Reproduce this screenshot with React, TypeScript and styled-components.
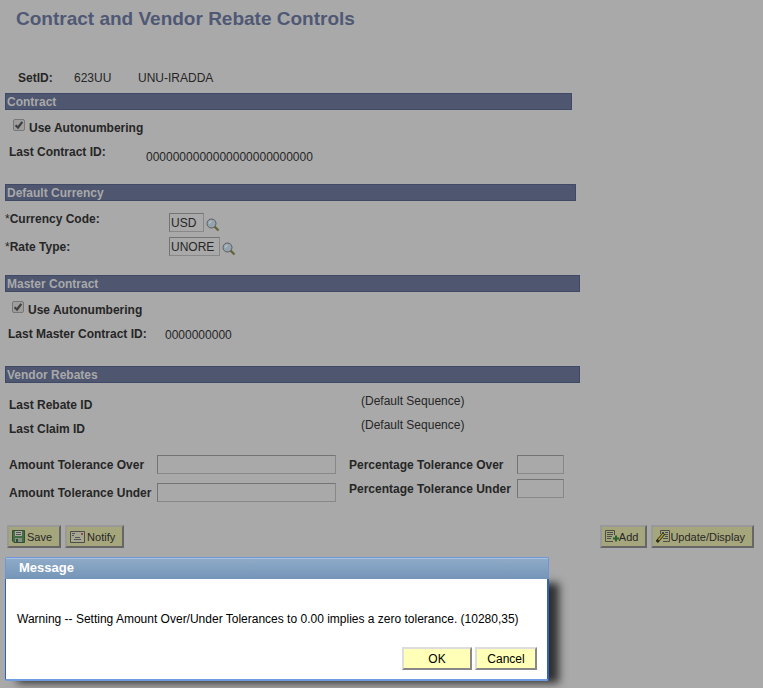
import React from "react";
import styled, { createGlobalStyle } from "styled-components";

const Global = createGlobalStyle`
  * { box-sizing: border-box; }
  body {
    margin: 0;
    background: #a9a9a9;
    color: #262626;
    font: 12px/16px "Liberation Sans", Arial, sans-serif;
  }
  html { background: #a9a9a9; }
  input, button { font-family: inherit; }
`;

const Page = styled.main`
  display: flex;
  flex-direction: column;
  padding: 0 9px 7px 5px;
`;

const Title = styled.h1`
  margin: 7px 0 0 11px;
  color: #4f5874;
  font-size: 19px;
  line-height: 24px;
  font-weight: bold;
`;

const SetRow = styled.div`
  display: grid;
  grid-template-columns: 56px 64px auto;
  margin: 39px 0 7px 13px;
`;

const Strong = styled.span`
  font-weight: bold;
`;

const Value = styled.output`
  font-size: 12px;
`;

const Section = styled.section<{ $width: number }>`
  width: 100%;
  max-width: ${(p) => p.$width}px;
  min-height: 91px;
`;

const Bar = styled.h2`
  margin: 0;
  padding: 2px 1px 0;
  border: 1px solid #404a66;
  background: #4e5670;
  color: #a9a9a9;
  font-size: 12px;
  line-height: 13px;
  font-weight: bold;
`;

const CheckRow = styled.label<{ $inset: number }>`
  display: flex;
  gap: 4px;
  padding: 9px 0 0 ${(p) => p.$inset}px;
  font-weight: bold;
  line-height: 18px;
`;

const Check = styled.input`
  appearance: none;
  width: 12px;
  height: 12px;
  margin: 0;
  border: 1px solid #777;
  border-radius: 2px;
  background: #9e9e9e
    url("data:image/svg+xml,%3Csvg xmlns='http://www.w3.org/2000/svg' viewBox='0 0 10 10'%3E%3Cpath d='M1.500 5.200 4 7.500 8.300 1.800' fill='none' stroke='%23404040' stroke-width='2.200'/%3E%3C/svg%3E");
`;

const FieldRow = styled.div<{ $label: number; $inset: number; $drop: number }>`
  display: grid;
  grid-template-columns: ${(p) => p.$label}px auto;
  justify-content: start;
  padding: 7px 0 0 ${(p) => p.$inset}px;
  & > output { padding-top: ${(p) => p.$drop}px; }
`;

const Label = styled.label`
  font-weight: bold;
  white-space: nowrap;
`;

const TextBox = styled.input<{ $width: number }>`
  width: ${(p) => p.$width}px;
  height: 19px;
  padding: 0 1px;
  border: 1px solid;
  border-color: #747474 #888 #888 #747474;
  border-radius: 0;
  background: #a9a9a9;
  color: #262626;
  font-size: 12px;
`;

const CurrencyGrid = styled.div`
  display: grid;
  grid-template-columns: 164px auto;
  grid-auto-rows: 19px;
  row-gap: 5px;
  padding-top: 12px;
`;

const Required = styled(Label)<{ $lift?: boolean }>`
  line-height: ${(p) => (p.$lift ? 12 : 20)}px;
  &::before { content: "*"; font-weight: normal; }
`;

const Lookup = styled.div`
  display: flex;
  align-items: flex-start;
  gap: 2px;
`;

const LookupButton = styled.button`
  display: flex;
  padding: 5px 0 0;
  border: 0;
  background: none;
`;

const RebateGrid = styled.div`
  display: grid;
  grid-template-columns: 352px auto;
  grid-auto-rows: 24px;
  justify-content: start;
  padding: 10px 0 0 4px;
  & > :nth-child(odd) { padding-top: 4px; }
`;

const Tolerances = styled.div`
  display: flex;
  gap: 13px;
  padding: 14px 0 0 4px;
`;

const ToleranceGrid = styled.div<{ $label: number; $gap: number }>`
  display: grid;
  grid-template-columns: ${(p) => p.$label}px auto;
  grid-auto-rows: 19px;
  align-content: start;
  align-items: center;
  row-gap: ${(p) => p.$gap}px;
`;

const Toolbar = styled.div`
  display: flex;
  gap: 4px;
  margin: 23px 0 9px 2px;
`;

const Spacer = styled.div`
  flex: 1;
`;

const ToolButton = styled.button<{ $gap?: number }>`
  display: flex;
  align-items: center;
  gap: ${(p) => p.$gap ?? 0}px;
  height: 23px;
  padding: 0 7px 0 3px;
  border: 2px solid;
  border-color: #999 #666 #666 #999;
  background: #a6a67d;
  color: #262626;
  font-size: 11px;
  white-space: nowrap;
`;

const Dialog = styled.div`
  width: 100%;
  max-width: 544px;
`;

const DialogTitle = styled.h2`
  position: relative;
  z-index: 1;
  margin: 0;
  padding: 0 13px;
  height: 22px;
  border: 1px solid #6f96d8;
  border-bottom: 0;
  border-radius: 2px 2px 0 0;
  box-shadow: inset 0 1px #a9c3dd;
  background: linear-gradient(#8fabc8, #7595b8);
  color: #fff;
  font-size: 13px;
  line-height: 20px;
`;

const DialogBody = styled.div`
  padding: 32px 10px 9px 11px;
  border: 1px solid #2e63b8;
  border-width: 0 2px 2px 1px;
  border-bottom-color: #6f9ae0;
  border-radius: 0 0 2px 2px;
  background: #fff;
  color: #000;
  box-shadow: 11px 3px 9px -1px #303030;
`;

const Message = styled.p`
  margin: 0 0 20px;
  line-height: 16px;
`;

const Actions = styled.div`
  display: flex;
  justify-content: flex-end;
  gap: 3px;
`;

const DialogButton = styled.button<{ $width: number }>`
  width: ${(p) => p.$width}px;
  height: 23px;
  padding: 0;
  border: 2px solid;
  border-color: #ddd #888 #888 #ddd;
  background: #ffffb8;
  color: #000;
  font-size: 12px;
`;

const LookupIcon = () => (
  <svg width="14" height="14" viewBox="0 0 14 14" fill="none">
    <path d="M8.6 8.6 12.5 12.5" stroke="#64643a" strokeWidth="2.2" />
    <circle cx="5.5" cy="5.5" r="4.5" fill="#93a4ae" stroke="#5c5c5c" />
    <path d="M3 5.5 5.5 3" stroke="#b4bec4" strokeWidth="1.5" />
  </svg>
);

const SaveIcon = () => (
  <svg width="13" height="13" viewBox="0 0 13 13">
    <path d="M.5.5h12v12H2L.5 11z" fill="#417047" stroke="#354b3c" />
    <path d="M3 1h7v5H3z" fill="#a9a9a0" />
    <path d="M4 2.5h5M4 4.5h5" stroke="#555" />
    <path d="M3 8h7v4H3z" fill="#85907f" />
    <path d="M4 9h2v3H4z" fill="#354b3c" />
  </svg>
);

const NotifyIcon = () => (
  <svg width="15" height="12" viewBox="0 0 15 12" fill="none">
    <path d="M.5.5h14v11H.5z" fill="#a6a691" stroke="#4c4c4c" />
    <path d="M2 2.5h3M2 4.5h2M5 6.5h5M4 8.5h7" stroke="#555" />
    <path d="M11 2h2v2h-2z" fill="#8e4940" />
  </svg>
);

const AddIcon = () => (
  <svg width="14" height="13" viewBox="0 0 14 13" fill="none">
    <path d="M8 11.5H.5V.5h9V5M2 2.5h6M2 4.5h6M2 6.5h5M2 8.5h4" stroke="#4d4d49" />
    <path d="M11 5.500v6M8 8.500h6" stroke="#286332" strokeWidth="2" />
  </svg>
);

const UpdateIcon = () => (
  <svg width="14" height="13" viewBox="0 0 14 13" fill="none">
    <path d="M4.5 4V.5h9v11H7M6 2.500h2M9 2.500h3M9 4.500h3M9 6.500h3M7 8.500h5" stroke="#4d4d49" />
    <path d="M.8 12 8 3.500" stroke="#26261c" strokeWidth="3" />
    <path d="M2.500 10 7.500 4" stroke="#b0a630" strokeWidth="1.400" />
  </svg>
);

export default function App() {
  return (
    <>
      <Global />
      <Page>
        <Title>Contract and Vendor Rebate Controls</Title>
        <SetRow>
          <Strong>SetID:</Strong>
          <Value>623UU</Value>
          <Value>UNU-IRADDA</Value>
        </SetRow>

        <Section $width={567}>
          <Bar>Contract</Bar>
          <CheckRow $inset={8}>
            <Check type="checkbox" defaultChecked />
            Use Autonumbering
          </CheckRow>
          <FieldRow $label={137} $inset={4} $drop={5}>
            <Strong>Last Contract ID:</Strong>
            <Value>0000000000000000000000000</Value>
          </FieldRow>
        </Section>

        <Section $width={571}>
          <Bar>Default Currency</Bar>
          <CurrencyGrid>
            <Required htmlFor="currency" $lift>Currency Code:</Required>
            <Lookup>
              <TextBox id="currency" $width={35} defaultValue="USD" />
              <LookupButton aria-label="Look up currency code"><LookupIcon /></LookupButton>
            </Lookup>
            <Required htmlFor="rate">Rate Type:</Required>
            <Lookup>
              <TextBox id="rate" $width={51} defaultValue="UNORE" />
              <LookupButton aria-label="Look up rate type"><LookupIcon /></LookupButton>
            </Lookup>
          </CurrencyGrid>
        </Section>

        <Section $width={575}>
          <Bar>Master Contract</Bar>
          <CheckRow $inset={7}>
            <Check type="checkbox" defaultChecked />
            Use Autonumbering
          </CheckRow>
          <FieldRow $label={157} $inset={3} $drop={1}>
            <Strong>Last Master Contract ID:</Strong>
            <Value>0000000000</Value>
          </FieldRow>
        </Section>

        <Section $width={575}>
          <Bar>Vendor Rebates</Bar>
          <RebateGrid>
            <Strong>Last Rebate ID</Strong>
            <Value>(Default Sequence)</Value>
            <Strong>Last Claim ID</Strong>
            <Value>(Default Sequence)</Value>
          </RebateGrid>
          <Tolerances>
            <ToleranceGrid $label={148} $gap={9}>
              <Label htmlFor="amount-over">Amount Tolerance Over</Label>
              <TextBox id="amount-over" $width={179} />
              <Label htmlFor="amount-under">Amount Tolerance Under</Label>
              <TextBox id="amount-under" $width={179} />
            </ToleranceGrid>
            <ToleranceGrid $label={168} $gap={5}>
              <Label htmlFor="percent-over">Percentage Tolerance Over</Label>
              <TextBox id="percent-over" $width={47} />
              <Label htmlFor="percent-under">Percentage Tolerance Under</Label>
              <TextBox id="percent-under" $width={47} />
            </ToleranceGrid>
          </Tolerances>
        </Section>

        <Toolbar>
          <ToolButton $gap={2}><SaveIcon />Save</ToolButton>
          <ToolButton $gap={2}><NotifyIcon />Notify</ToolButton>
          <Spacer />
          <ToolButton><AddIcon />Add</ToolButton>
          <ToolButton><UpdateIcon />Update/Display</ToolButton>
        </Toolbar>

        <Dialog role="dialog" aria-labelledby="message-title">
          <DialogTitle id="message-title">Message</DialogTitle>
          <DialogBody>
            <Message>
              Warning -- Setting Amount Over/Under Tolerances to 0.00 implies a zero tolerance. (10280,35)
            </Message>
            <Actions>
              <DialogButton $width={70}>OK</DialogButton>
              <DialogButton $width={62}>Cancel</DialogButton>
            </Actions>
          </DialogBody>
        </Dialog>
      </Page>
    </>
  );
}
